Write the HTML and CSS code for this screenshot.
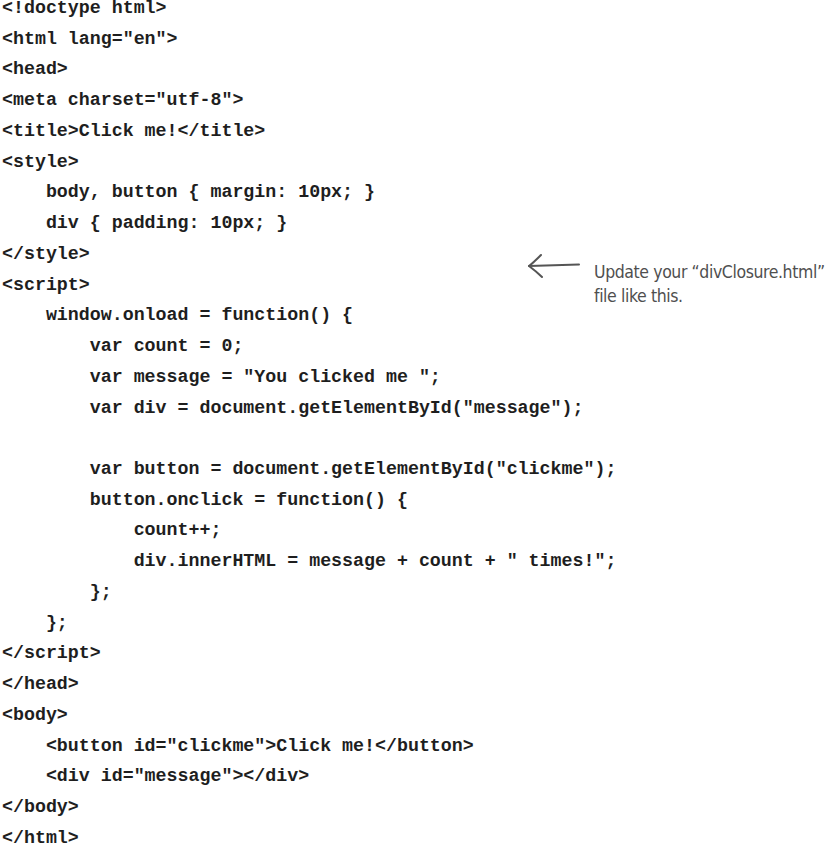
FILE: index.html
```html
<!doctype html>
<html lang="en">
<head>
<meta charset="utf-8">
<title>divClosure</title>
<link rel="stylesheet" href="styles.css">
</head>
<body>
<div class="page">
<pre class="code">&lt;!doctype html&gt;
&lt;html lang="en"&gt;
&lt;head&gt;
&lt;meta charset="utf-8"&gt;
&lt;title&gt;Click me!&lt;/title&gt;
&lt;style&gt;
    body, button { margin: 10px; }
    div { padding: 10px; }
&lt;/style&gt;
&lt;script&gt;
    window.onload = function() {
        var count = 0;
        var message = "You clicked me ";
        var div = document.getElementById("message");
 
        var button = document.getElementById("clickme");
        button.onclick = function() {
            count++;
            div.innerHTML = message + count + " times!";
        };
    };
&lt;/script&gt;
&lt;/head&gt;
&lt;body&gt;
    &lt;button id="clickme"&gt;Click me!&lt;/button&gt;
    &lt;div id="message"&gt;&lt;/div&gt;
&lt;/body&gt;
&lt;/html&gt;</pre>
<div class="note">
  <svg class="arrow" width="56" height="26" viewBox="0 0 56 26">
    <path d="M3 13 C 18 12.5, 38 12, 53 11.5" fill="none" stroke="#555" stroke-width="2" stroke-linecap="round"/>
    <path d="M15 2 C 11 6, 7 10, 3 13 C 7 16, 11 19, 16 24" fill="none" stroke="#555" stroke-width="2" stroke-linecap="round" stroke-linejoin="round"/>
  </svg>
  <div class="note-text">
    <div class="note-line">Update your “divClosure.html”</div>
    <div class="note-line">file like this.</div>
  </div>
</div>
</div>
</body>
</html>
```
FILE: styles.css
```css
html, body {
  margin: 0;
  padding: 0;
  background: #ffffff;
}
.page {
  position: relative;
  width: 840px;
  height: 846px;
  overflow: hidden;
}
.code {
  margin: -7px 0 0 2px;
  font-family: "Liberation Mono", "Courier New", monospace;
  font-weight: bold;
  font-size: 18.3px;
  line-height: 30.74px;
  color: #1e1e1e;
}
.note {
  position: absolute;
  left: 526px;
  top: 252px;
  display: flex;
  align-items: flex-start;
  gap: 12px;
}
.arrow {
  margin-top: 1px;
}
.note-text {
  display: flex;
  flex-direction: column;
  margin-top: 8px;
}
.note-line {
  font-family: "DejaVu Sans Condensed", "DejaVu Sans", sans-serif;
  font-size: 17.5px;
  line-height: 24px;
  color: #4f4f4f;
  letter-spacing: -0.4px;
  white-space: nowrap;
}
```
